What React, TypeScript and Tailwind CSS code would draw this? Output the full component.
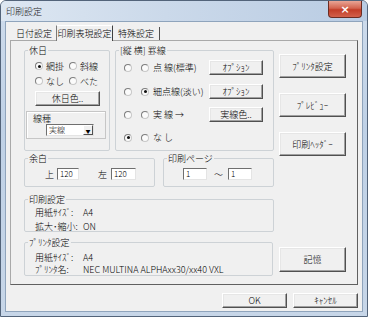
import React from "react";

const font = "font-['Noto_Sans_CJK_JP',sans-serif] font-light leading-[11px]";

function Radio({ checked }: { checked?: boolean }) {
  return (
    <span className="w-[8px] h-[8px] shrink-0 rounded-full border border-t-[#7d7d7d] border-l-[#7d7d7d] border-r-[#c8c8c8] border-b-[#c8c8c8] bg-[#fbfbfb] flex items-center justify-center">
      {checked && <span className="w-[3px] h-[3px] rounded-full bg-[#111]" />}
    </span>
  );
}

function Btn({ children, className = "" }: { children: React.ReactNode; className?: string }) {
  return (
    <div
      className={
        "flex items-center justify-center bg-[#f0f0f0] border border-t-[#ffffff] border-l-[#ffffff] border-r-[#505050] border-b-[#505050] shadow-[inset_-1px_-1px_0_#a0a0a0,inset_1px_1px_0_#e6e6e6] text-[9px] leading-none text-black " +
        className
      }
    >
      {children}
    </div>
  );
}

function Group({ label, className = "", children }: { label: string; className?: string; children?: React.ReactNode }) {
  return (
    <fieldset className={"border border-[#cdd2d6] rounded-[2px] min-w-0 " + className}>
      <legend className="ml-[3px] px-[1px] text-[9px] leading-[11px]">{label}</legend>
      {children}
    </fieldset>
  );
}

function Input({ value, className = "" }: { value: string; className?: string }) {
  return (
    <div
      className={
        "h-[12px] bg-white border border-t-[#6f6f6f] border-l-[#6f6f6f] border-r-[#e4e4e4] border-b-[#e4e4e4] text-[8px] leading-[10px] pl-[2px] " +
        className
      }
    >
      {value}
    </div>
  );
}

function RadioText({ checked, text }: { checked?: boolean; text: string }) {
  return (
    <div className="flex items-center gap-[3px]">
      <Radio checked={checked} />
      <span>{text}</span>
    </div>
  );
}

function KeisenRow({ c1, c2, text, btn, className = "" }: { c1?: boolean; c2?: boolean; text: string; btn?: string; className?: string }) {
  return (
    <div className={"flex items-center h-[15px] pl-[8px] " + className}>
      <Radio checked={c1} />
      <span className="w-[9px]" />
      <Radio checked={c2} />
      <span className="ml-[4px] w-[56px] whitespace-nowrap">{text}</span>
      {btn && <Btn className="w-[54px] h-[15px]">{btn}</Btn>}
    </div>
  );
}

export default function App() {
  return (
    <div className={"w-[368px] h-[317px] text-[9px] text-black " + font}>
      <div className="w-[368px] h-[317px] flex flex-col border border-[#53647a] rounded-t-[6px] overflow-hidden bg-[linear-gradient(180deg,#cfdcec_0%,#bfd1e6_40%,#c7d6e8_100%)]">
        {/* title bar */}
        <div className="h-[20px] flex items-start justify-between bg-[linear-gradient(90deg,#dde7f2_0%,#cbd9ea_45%,#b9cce3_100%)]">
          <span className="ml-[5px] mt-[5px] text-[9px] leading-[11px] text-[#1a1a1a]">印刷設定</span>
          <div className="mr-[5px] w-[34px] h-[17px] rounded-b-[4px] border border-t-0 border-[#6b2c22] bg-[linear-gradient(180deg,#e9a595_0%,#d3644f_45%,#c23d27_55%,#d2604a_100%)] flex items-center justify-center text-white text-[11px] leading-none font-bold font-['DejaVu_Sans',sans-serif]">
            ×
          </div>
        </div>
        {/* client */}
        <div className="mx-[4px] h-[291px] bg-[#f0f0f0] border border-[#8fa4bc] flex flex-col">
          {/* tabs */}
          <div className="flex items-end h-[18px] pl-[6px]">
            <div className="w-[44px] h-[13px] flex items-center justify-center leading-none">日付設定</div>
            <div className="relative z-10 w-[57px] h-[16px] mb-[-1px] bg-[#f0f0f0] flex items-start pt-[3px] justify-center leading-none border border-b-0 border-l-[#7a7a7a] border-t-[#ffffff] border-r-[#404040]">
              印刷表現設定
            </div>
            <div className="w-[47px] h-[13px] flex items-center justify-center leading-none border-r border-r-[#505050]">特殊設定</div>
          </div>
          {/* panel */}
          <div className="ml-[4px] w-[348px] h-[245px] border border-t-[#a9a9a9] border-l-[#a9a9a9] border-r-[#606060] border-b-[#606060] flex pt-[4px] pl-[13px]">
            {/* left column */}
            <div className="w-[250px] flex flex-col">
              <div className="flex h-[106px] gap-[5px]">
                <Group label="休日" className="w-[86px] h-[106px]">
                  <div className="grid grid-cols-[34px_auto] pl-[10px] mt-[4px] h-[12px] items-center">
                    <RadioText checked text="網掛" />
                    <RadioText text="斜線" />
                  </div>
                  <div className="grid grid-cols-[34px_auto] pl-[10px] mt-[3px] h-[12px] items-center">
                    <RadioText text="なし" />
                    <RadioText text="べた" />
                  </div>
                  <Btn className="ml-[10px] mt-[4px] w-[65px] h-[15px]">休日色..</Btn>
                  <div className="ml-[1px] mt-[5px] w-[80px] h-[28px] border border-[#c6c6c6] shadow-[inset_1px_1px_0_#ffffff]">
                    <div className="pl-[6px] pt-[1px] leading-[11px]">線種</div>
                    <div className="ml-[19px] w-[48px] h-[12px] flex bg-white border border-t-[#6f6f6f] border-l-[#6f6f6f] border-r-[#e4e4e4] border-b-[#e4e4e4]">
                      <span className="flex-1 text-[8px] leading-[10px] pl-[2px]">実線</span>
                      <span className="w-[10px] h-[10px] bg-[#f0f0f0] border border-t-white border-l-white border-r-[#505050] border-b-[#505050] flex items-center justify-center text-[5px] leading-none">▼</span>
                    </div>
                  </div>
                </Group>
                <Group label="[縦 横] 罫線" className="w-[159px] h-[106px]">
                  <KeisenRow className="mt-[4px]" text="点 線(標準)" btn="ｵﾌﾟｼｮﾝ" />
                  <KeisenRow className="mt-[9px]" c2 text="細点線(淡い)" btn="ｵﾌﾟｼｮﾝ" />
                  <KeisenRow className="mt-[8px]" text="実 線 →" btn="実線色.." />
                  <KeisenRow className="mt-[8px]" c1 text="な し" />
                </Group>
              </div>
              <div className="flex mt-[2px] h-[34px] gap-[8px]">
                <Group label="余白" className="w-[131px] h-[34px]">
                  <div className="flex items-center mt-[4px] pl-[20px]">
                    <span>上</span>
                    <Input value="120" className="ml-[3px] w-[22px]" />
                    <span className="ml-[19px]">左</span>
                    <Input value="120" className="ml-[4px] w-[25px]" />
                  </div>
                </Group>
                <Group label="印刷ページ" className="w-[111px] h-[34px]">
                  <div className="flex items-center mt-[4px] pl-[19px]">
                    <Input value="1" className="w-[24px]" />
                    <span className="ml-[7px] w-[14px]">～</span>
                    <Input value="1" className="ml-[0px] w-[24px]" />
                  </div>
                </Group>
              </div>
              <Group label="印刷設定" className="mt-[7px] w-[250px] h-[38px]">
                <div className="flex h-[12px] mt-[1px] items-center pl-[10px]">
                  <span className="w-[48px]">用紙ｻｲｽﾞ:</span>
                  <span>A4</span>
                </div>
                <div className="flex h-[12px] mt-[2px] items-center pl-[10px]">
                  <span className="w-[48px]">拡大･縮小:</span>
                  <span>ON</span>
                </div>
              </Group>
              <Group label="ﾌﾟﾘﾝﾀ設定" className="mt-[5px] w-[249px] h-[39px]">
                <div className="flex h-[12px] mt-[3px] items-center pl-[10px]">
                  <span className="w-[48px]">用紙ｻｲｽﾞ:</span>
                  <span>A4</span>
                </div>
                <div className="flex h-[12px] items-center pl-[10px]">
                  <span className="w-[48px]">ﾌﾟﾘﾝﾀ名:</span>
                  <span className="whitespace-nowrap">NEC MULTINA ALPHAxx30/xx40 VXL</span>
                </div>
              </Group>
            </div>
            {/* right column */}
            <div className="ml-[5px] w-[67px] flex flex-col">
              <Btn className="mt-[9px] w-[67px] h-[24px]">ﾌﾟﾘﾝﾀ設定</Btn>
              <Btn className="mt-[15px] w-[67px] h-[24px]">ﾌﾟﾚﾋﾞｭｰ</Btn>
              <Btn className="mt-[15px] w-[67px] h-[24px]">印刷ﾍｯﾀﾞｰ</Btn>
              <Btn className="mt-[91px] w-[67px] h-[25px]">記憶</Btn>
            </div>
          </div>
          {/* bottom buttons */}
          <div className="flex justify-end gap-[6px] pr-[4px] mt-[8px]">
            <Btn className="w-[65px] h-[15px]">OK</Btn>
            <Btn className="w-[65px] h-[15px]">ｷｬﾝｾﾙ</Btn>
          </div>
        </div>
      </div>
    </div>
  );
}
